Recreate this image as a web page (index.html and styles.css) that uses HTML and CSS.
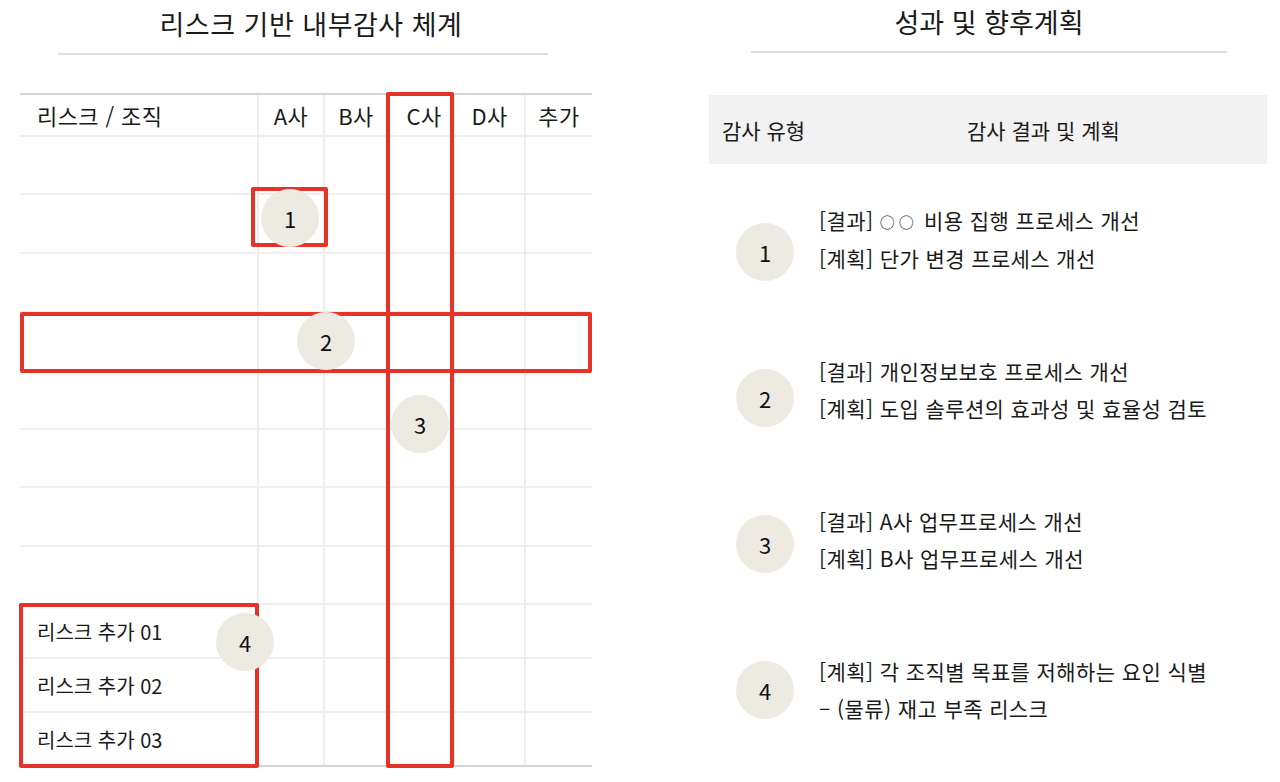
FILE: index.html
```html
<!DOCTYPE html>
<html lang="ko">
<head>
<meta charset="utf-8">
<title>리스크 기반 내부감사 체계</title>
<link rel="stylesheet" href="styles.css">
</head>
<body>
<div class="page">
  <section class="panel panel-left">
    <h2 class="title title-left">리스크 기반 내부감사 체계</h2>
    <div class="divider divider-left"></div>
    <div class="matrix">
      <div class="grid">
        <div class="lab hd">리스크 / 조직</div><div class="cell hd">A사</div><div class="cell hd">B사</div><div class="cell hd hd-c">C사</div><div class="cell hd">D사</div><div class="cell hd">추가</div>

        <div class="lab"></div><div class="cell"></div><div class="cell"></div><div class="cell"></div><div class="cell"></div><div class="cell"></div>
        <div class="lab"></div><div class="cell"></div><div class="cell"></div><div class="cell"></div><div class="cell"></div><div class="cell"></div>
        <div class="lab"></div><div class="cell"></div><div class="cell"></div><div class="cell"></div><div class="cell"></div><div class="cell"></div>
        <div class="lab"></div><div class="cell"></div><div class="cell"></div><div class="cell"></div><div class="cell"></div><div class="cell"></div>
        <div class="lab"></div><div class="cell"></div><div class="cell"></div><div class="cell"></div><div class="cell"></div><div class="cell"></div>
        <div class="lab"></div><div class="cell"></div><div class="cell"></div><div class="cell"></div><div class="cell"></div><div class="cell"></div>
        <div class="lab"></div><div class="cell"></div><div class="cell"></div><div class="cell"></div><div class="cell"></div><div class="cell"></div>
        <div class="lab"></div><div class="cell"></div><div class="cell"></div><div class="cell"></div><div class="cell"></div><div class="cell"></div>

        <div class="lab name">리스크 추가 01</div><div class="cell"></div><div class="cell"></div><div class="cell"></div><div class="cell"></div><div class="cell"></div>
        <div class="lab name">리스크 추가 02</div><div class="cell"></div><div class="cell"></div><div class="cell"></div><div class="cell"></div><div class="cell"></div>
        <div class="lab name end">리스크 추가 03</div><div class="cell end"></div><div class="cell end"></div><div class="cell end"></div><div class="cell end"></div><div class="cell end"></div>
      </div>

      <div class="hl hl-1"></div>
      <div class="hl hl-2"></div>
      <div class="hl hl-3"></div>
      <div class="hl hl-4"></div>

      <div class="badge pin pin-1">1</div>
      <div class="badge pin pin-2">2</div>
      <div class="badge pin pin-3">3</div>
      <div class="badge pin pin-4">4</div>
    </div>
  </section>

  <section class="panel panel-right">
    <h2 class="title title-right">성과 및 향후계획</h2>
    <div class="divider divider-right"></div>
    <div class="head">
      <div class="head-type">감사 유형</div>
      <div class="head-result">감사 결과 및 계획</div>
    </div>
    <div class="results">
      <div class="badges">
        <div class="badge">1</div>
        <div class="badge">2</div>
        <div class="badge">3</div>
        <div class="badge">4</div>
      </div>
      <div class="notes">
        <div class="note">
          <p>[결과] <span class="ph">○○</span> 비용 집행 프로세스 개선</p>
          <p>[계획] 단가 변경 프로세스 개선</p>
        </div>
        <div class="note">
          <p>[결과] 개인정보보호 프로세스 개선</p>
          <p>[계획] 도입 솔루션의 효과성 및 효율성 검토</p>
        </div>
        <div class="note">
          <p>[결과] A사 업무프로세스 개선</p>
          <p>[계획] B사 업무프로세스 개선</p>
        </div>
        <div class="note">
          <p>[계획] 각 조직별 목표를 저해하는 요인 식별</p>
          <p>– (물류) 재고 부족 리스크</p>
        </div>
      </div>
    </div>
  </section>
</div>
</body>
</html>
```

FILE: styles.css
```css
* { box-sizing: border-box; }

body {
  margin: 0;
  background: #ffffff;
  font-family: "Noto Sans CJK KR", "Noto Sans", sans-serif;
  color: #1a1a1a;
}

.page {
  display: flex;
  width: 1280px;
  height: 782px;
  overflow: hidden;
}

.panel-left {
  margin-left: 20px;
  width: 572px;
}

.panel-right {
  margin-left: 117px;
  width: 558px;
}

.title {
  margin: 0;
  font-size: 27px;
  font-weight: 400;
  text-align: center;
  color: #1a1a1a;
}

.title-left {
  line-height: 48px;
  padding-left: 10px;
  letter-spacing: 0.5px;
}

.title-right {
  line-height: 44px;
  padding-left: 2px;
}

.divider {
  height: 2px;
  background: #dedede;
}

.divider-left {
  margin: 5px 0 0 38px;
  width: 490px;
}

.divider-right {
  margin: 7px 0 0 42px;
  width: 476px;
}

/* ---------- risk matrix ---------- */
.matrix {
  position: relative;
  margin-top: 38px;
}

.grid {
  display: grid;
  grid-template-columns: 237px 66px 64px 66px 71px 68px;
  grid-template-rows: 42px 58px 59px 59px 59px 58px 58px 59px 58px 54px 54px 52px;
  border-top: 2px solid #d4d4d4;
  border-bottom: 2px solid #d4d4d4;
}

.lab,
.cell {
  border-bottom: 2px solid #eeeeee;
}

.cell {
  border-left: 2px solid #eeeeee;
}

.end {
  border-bottom: none;
}

.hd {
  display: flex;
  align-items: center;
  font-size: 22px;
  letter-spacing: 0.4px;
  color: #1a1a1a;
}

.lab.hd {
  padding-left: 17px;
}

.cell.hd {
  justify-content: center;
}

.hd-c {
  padding-left: 6px;
}

.name {
  display: flex;
  align-items: center;
  padding-left: 17px;
  font-size: 20px;
  color: #1a1a1a;
}

.hl {
  position: absolute;
  border: 4px solid #e5332a;
  border-radius: 2px;
}

.hl-1 { left: 231px; top: 94px; width: 77px; height: 60px; }
.hl-2 { left: 0; top: 219px; width: 572px; height: 61px; }
.hl-3 { left: 366px; top: -1px; width: 68px; height: 676px; }
.hl-4 { left: -1px; top: 510px; width: 240px; height: 165px; }

.badge {
  width: 58px;
  height: 58px;
  border-radius: 50%;
  background: #edeae2;
  display: flex;
  align-items: center;
  justify-content: center;
  font-size: 22px;
  color: #111111;
  flex: none;
}

.pin {
  position: absolute;
}

.pin-1 { left: 241px; top: 96px; }
.pin-2 { left: 277px; top: 219px; }
.pin-3 { left: 371px; top: 302px; }
.pin-4 { left: 196px; top: 520px; }

/* ---------- results ---------- */
.head {
  display: flex;
  align-items: center;
  height: 69px;
  margin-top: 42px;
  padding-left: 13px;
  background: #f2f2f2;
  font-size: 21px;
  color: #1a1a1a;
}

.head-type {
  width: 245px;
}

.results {
  display: flex;
}

.badges {
  display: flex;
  flex-direction: column;
  gap: 88px;
  margin: 59px 0 0 27px;
}

.notes {
  display: flex;
  flex-direction: column;
  gap: 76px;
  margin: 38px 0 0 25px;
  font-size: 21px;
  letter-spacing: 0.4px;
  line-height: 37px;
  color: #1a1a1a;
}

.note p {
  margin: 0;
  white-space: nowrap;
}

.ph {
  font-size: 15px;
  letter-spacing: 4px;
  vertical-align: 1px;
}
```
